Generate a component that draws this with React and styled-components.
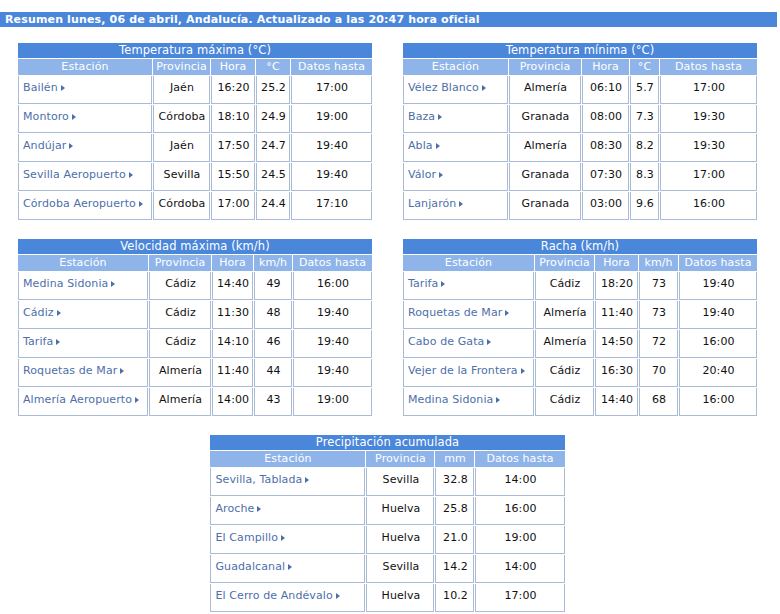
// External dependencies
import React from 'react';
import styled, { createGlobalStyle } from 'styled-components';

const GlobalStyle = createGlobalStyle`
  body {
    margin: 0;
    background: #fff;
    color: #111;
    font-family: "DejaVu Sans", Verdana, sans-serif;
    font-size: 11px;
  }
`;

const Page = styled.div`
  width: 780px;
  padding-top: 12px;
`;

const SummaryBar = styled.div`
  box-sizing: border-box;
  width: 777px;
  height: 15px;
  padding-left: 5px;
  line-height: 15px;
  background: #4a86da;
  color: #fff;
  font-weight: bold;
  letter-spacing: 0.15px;
  white-space: nowrap;
`;

const Board = styled.div`
  display: grid;
  grid-template-columns: 356px 356px;
  column-gap: 29px;
  row-gap: 17px;
  width: 741px;
  margin: 15px 0 0 17px;
`;

const Table = styled.table`
  width: 356px;
  table-layout: fixed;
  border-collapse: separate;
  border-spacing: 1px;
  letter-spacing: 0.1px;

  ${({ $wide }) =>
    $wide &&
    `
      grid-column: 1 / -1;
      justify-self: center;
    `}
`;

const Col = styled.col`
  width: ${({ $width }) => $width}px;
`;

const TitleCell = styled.th`
  height: 15px;
  padding: 0;
  line-height: 15px;
  background: #4a86da;
  color: #fff;
  font-size: 11.5px;
  font-weight: normal;
  white-space: nowrap;
`;

const HeadCell = styled.th`
  height: 16px;
  padding: 0 2px;
  line-height: 16px;
  background: #8fb4ea;
  color: #fff;
  font-weight: normal;
  white-space: nowrap;
  overflow: hidden;
`;

const Cell = styled.td`
  padding: 5px 3px 9px 4px;
  line-height: 13px;
  border: 1px solid #a9bbd6;
  border-top: 0;
  vertical-align: top;
  text-align: ${({ $left }) => ($left ? 'left' : 'center')};
  white-space: nowrap;
`;

const StationLink = styled.a`
  color: #4d6fa9;
  text-decoration: none;

  &::after {
    content: '';
    display: inline-block;
    margin-left: 3px;
    vertical-align: 0;
    border-left: 4px solid #4d6fa9;
    border-top: 3px solid transparent;
    border-bottom: 3px solid transparent;
  }
`;

const SECTIONS = [
  {
    title: 'Temperatura máxima (°C)',
    columns: [
      ['Estación', 134],
      ['Provincia', 57],
      ['Hora', 44],
      ['°C', 34],
      ['Datos hasta', 81],
    ],
    rows: [
      ['Bailén', 'Jaén', '16:20', '25.2', '17:00'],
      ['Montoro', 'Córdoba', '18:10', '24.9', '19:00'],
      ['Andújar', 'Jaén', '17:50', '24.7', '19:40'],
      ['Sevilla Aeropuerto', 'Sevilla', '15:50', '24.5', '19:40'],
      ['Córdoba Aeropuerto', 'Córdoba', '17:00', '24.4', '17:10'],
    ],
  },
  {
    title: 'Temperatura mínima (°C)',
    columns: [
      ['Estación', 105],
      ['Provincia', 72],
      ['Hora', 47],
      ['°C', 29],
      ['Datos hasta', 97],
    ],
    rows: [
      ['Vélez Blanco', 'Almería', '06:10', '5.7', '17:00'],
      ['Baza', 'Granada', '08:00', '7.3', '19:30'],
      ['Abla', 'Almería', '08:30', '8.2', '19:30'],
      ['Válor', 'Granada', '07:30', '8.3', '17:00'],
      ['Lanjarón', 'Granada', '03:00', '9.6', '16:00'],
    ],
  },
  {
    title: 'Velocidad máxima (km/h)',
    columns: [
      ['Estación', 130],
      ['Provincia', 62],
      ['Hora', 41],
      ['km/h', 38],
      ['Datos hasta', 79],
    ],
    rows: [
      ['Medina Sidonia', 'Cádiz', '14:40', '49', '16:00'],
      ['Cádiz', 'Cádiz', '11:30', '48', '19:40'],
      ['Tarifa', 'Cádiz', '14:10', '46', '19:40'],
      ['Roquetas de Mar', 'Almería', '11:40', '44', '19:40'],
      ['Almería Aeropuerto', 'Almería', '14:00', '43', '19:00'],
    ],
  },
  {
    title: 'Racha (km/h)',
    columns: [
      ['Estación', 131],
      ['Provincia', 59],
      ['Hora', 43],
      ['km/h', 39],
      ['Datos hasta', 78],
    ],
    rows: [
      ['Tarifa', 'Cádiz', '18:20', '73', '19:40'],
      ['Roquetas de Mar', 'Almería', '11:40', '73', '19:40'],
      ['Cabo de Gata', 'Almería', '14:50', '72', '16:00'],
      ['Vejer de la Frontera', 'Cádiz', '16:30', '70', '20:40'],
      ['Medina Sidonia', 'Cádiz', '14:40', '68', '16:00'],
    ],
  },
  {
    title: 'Precipitación acumulada',
    wide: true,
    columns: [
      ['Estación', 155],
      ['Provincia', 68],
      ['mm', 39],
      ['Datos hasta', 89],
    ],
    rows: [
      ['Sevilla, Tablada', 'Sevilla', '32.8', '14:00'],
      ['Aroche', 'Huelva', '25.8', '16:00'],
      ['El Campillo', 'Huelva', '21.0', '19:00'],
      ['Guadalcanal', 'Sevilla', '14.2', '14:00'],
      ['El Cerro de Andévalo', 'Huelva', '10.2', '17:00'],
    ],
  },
];

function SummaryTable({ title, columns, rows, wide }) {
  return (
    <Table $wide={wide}>
      <colgroup>
        {columns.map(([label, width]) => (
          <Col key={label} $width={width} />
        ))}
      </colgroup>
      <thead>
        <tr>
          <TitleCell colSpan={columns.length}>{title}</TitleCell>
        </tr>
        <tr>
          {columns.map(([label]) => (
            <HeadCell key={label}>{label}</HeadCell>
          ))}
        </tr>
      </thead>
      <tbody>
        {rows.map(([station, ...values]) => (
          <tr key={station}>
            <Cell $left>
              <StationLink href="#">{station}</StationLink>
            </Cell>
            {values.map((value, i) => (
              <Cell key={i}>{value}</Cell>
            ))}
          </tr>
        ))}
      </tbody>
    </Table>
  );
}

export default function App() {
  return (
    <>
      <GlobalStyle />
      <Page>
        <SummaryBar>
          Resumen lunes, 06 de abril, Andalucía. Actualizado a las 20:47 hora
          oficial
        </SummaryBar>
        <Board>
          {SECTIONS.map(section => (
            <SummaryTable key={section.title} {...section} />
          ))}
        </Board>
      </Page>
    </>
  );
}
